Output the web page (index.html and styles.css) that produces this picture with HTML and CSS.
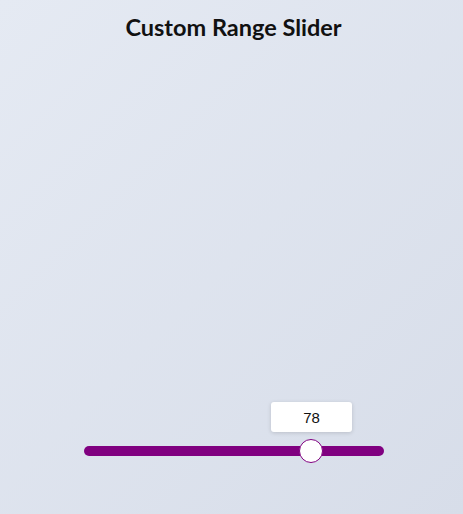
FILE: index.html
```html
<!DOCTYPE html>
<html>
<head>
<meta charset="utf-8">
<link rel="stylesheet" href="styles.css">
</head>
<body>
<main class="page">
  <h1 class="title">Custom Range Slider</h1>
  <div class="slider-wrap">
    <div class="bubble" style="left: 187px;">78</div>
    <input class="range" type="range" min="0" max="100" value="78">
  </div>
</main>
</body>
</html>
```
FILE: styles.css
```css
html, body {
  margin: 0;
  padding: 0;
}
body {
  background: linear-gradient(135deg, #e5eaf3 0%, #d7dde9 100%);
  min-height: 100vh;
  font-family: Lato, "Noto Sans", sans-serif;
}
.page {
  height: 514px;
  display: flex;
  flex-direction: column;
  align-items: center;
  box-sizing: border-box;
  padding-top: 13px;
  padding-left: 4px;
}
.title {
  margin: 0;
  font-size: 23.5px;
  font-weight: 700;
  color: #111;
  line-height: 29px;
}
.slider-wrap {
  position: relative;
  width: 300px;
  margin-top: 404px;
  margin-left: 1px;
}
.bubble {
  position: absolute;
  top: -44px;
  width: 81px;
  height: 30px;
  box-sizing: border-box;
  background: #fff;
  border-radius: 3px;
  box-shadow: 0 1px 4px rgba(0, 0, 0, 0.15);
  font-family: "Liberation Sans", Arial, sans-serif;
  font-size: 15px;
  color: #111;
  display: flex;
  align-items: center;
  justify-content: center;
}
.range {
  -webkit-appearance: none;
  appearance: none;
  display: block;
  margin: 0;
  width: 300px;
  height: 10px;
  border-radius: 5px;
  background: #800080;
  outline: none;
}
.range::-webkit-slider-thumb {
  -webkit-appearance: none;
  appearance: none;
  width: 24px;
  height: 24px;
  border-radius: 50%;
  background: #fff;
  border: 1px solid #800080;
  box-sizing: border-box;
  cursor: pointer;
}
```
